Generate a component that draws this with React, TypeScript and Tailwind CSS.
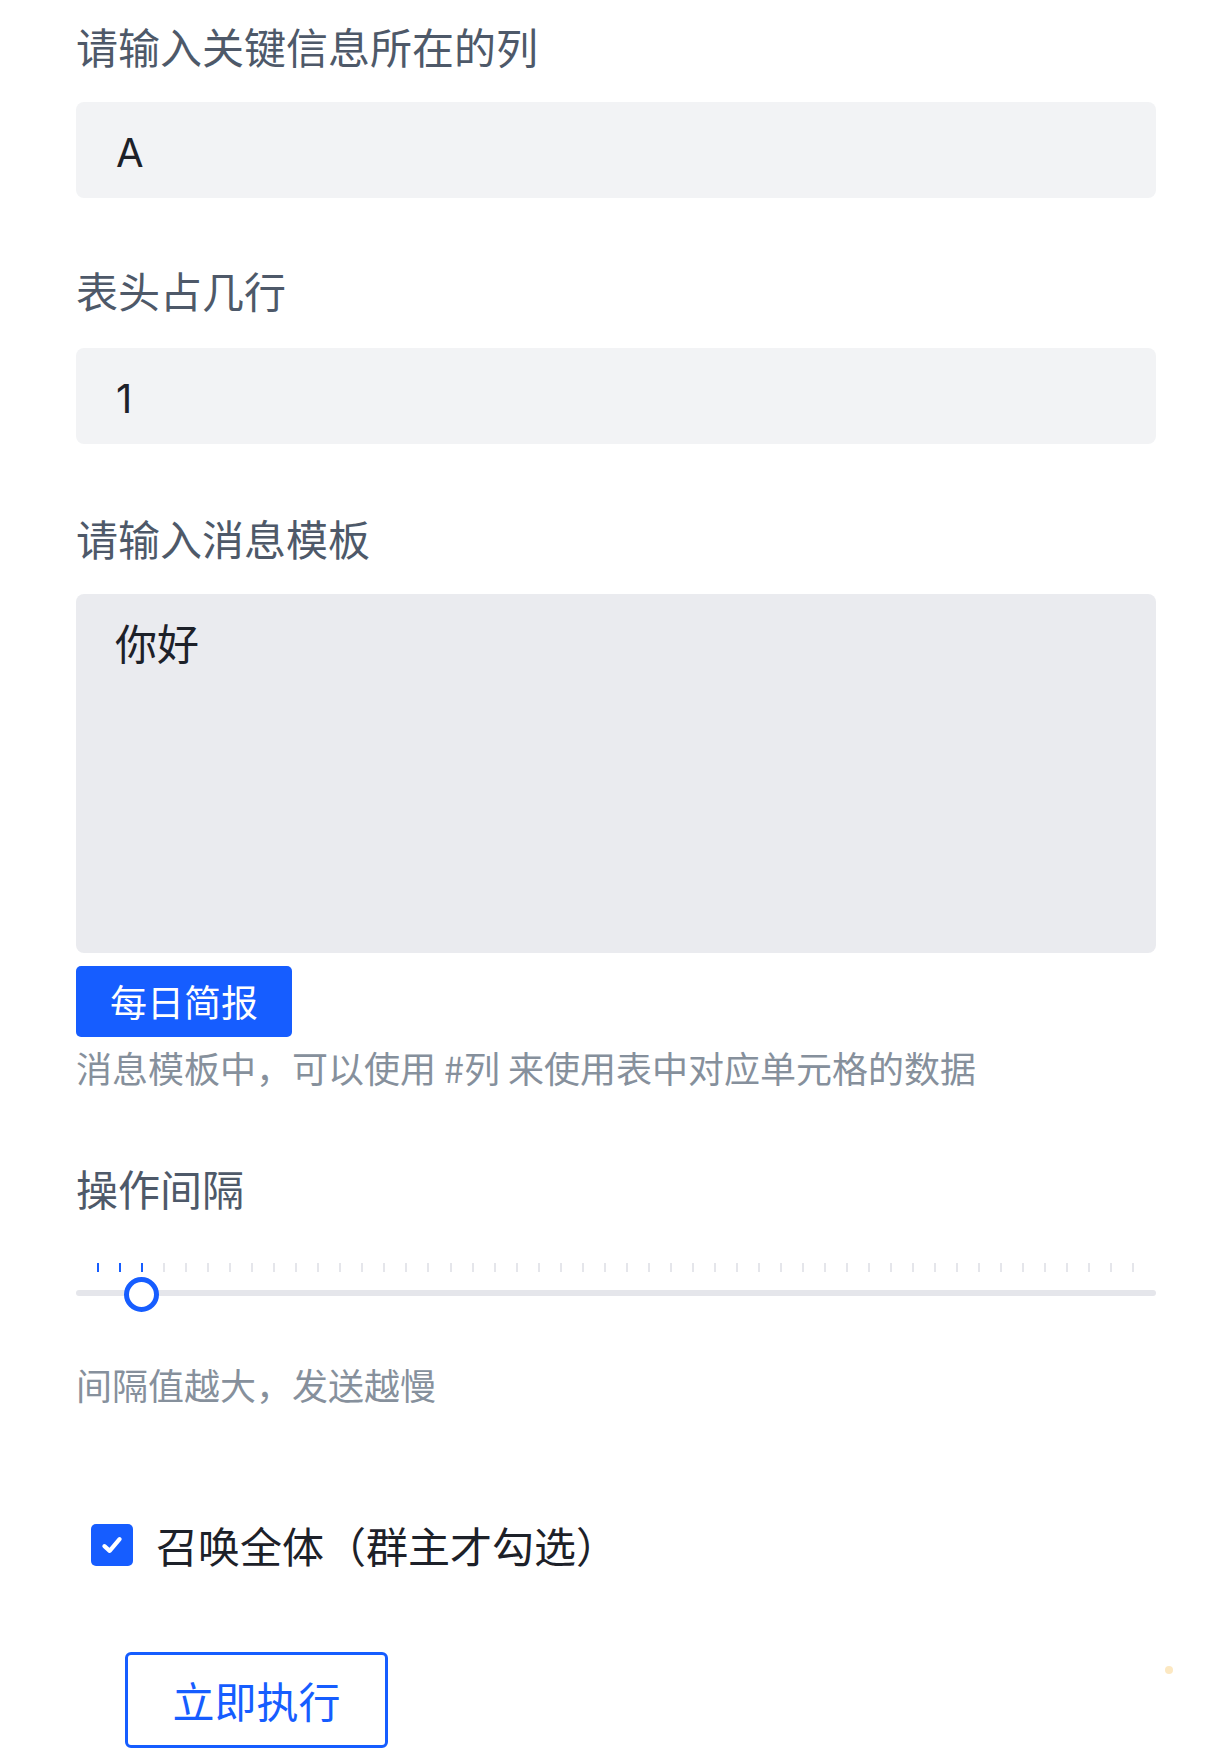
import React from 'react';

const TICKS = Array.from({ length: 48 }, (_, i) => i);
const ACTIVE_TICKS = 3;

export default function App() {
  return (
    <div className="relative min-h-[1756px] bg-white font-['Noto_Sans_CJK_SC',sans-serif]">
      <div className="ml-[76px] w-[1080px] pt-[25px] flex flex-col">
        {/* 关键信息列 */}
        <label className="text-[42px] leading-[42px] text-[#4e5969]">请输入关键信息所在的列</label>
        <input
          readOnly
          value="A"
          className="mt-[35px] h-[96px] w-full rounded-[8px] bg-[#f2f3f5] pl-[40px] pt-[4px] font-['Inter',sans-serif] text-[40px] leading-[42px] text-[#1d2129] outline-none"
        />

        {/* 表头 */}
        <label className="mt-[71px] text-[42px] leading-[42px] text-[#4e5969]">表头占几行</label>
        <input
          readOnly
          value="1"
          className="mt-[37px] h-[96px] w-full rounded-[8px] bg-[#f2f3f5] pl-[40px] pt-[4px] font-['Inter',sans-serif] text-[40px] leading-[42px] text-[#1d2129] outline-none"
        />

        {/* 消息模板 */}
        <label className="mt-[73px] text-[42px] leading-[42px] text-[#4e5969]">请输入消息模板</label>
        <textarea
          readOnly
          value="你好"
          className="mt-[35px] h-[359px] w-full resize-none rounded-[8px] bg-[#eaebef] pl-[39px] pt-[27px] text-[42px] leading-[42px] text-[#1d2129] outline-none"
        />
        <button className="mt-[13px] flex h-[71px] w-[216px] items-center justify-center rounded-[5px] bg-[#165dff] text-[37px] leading-none text-white">
          每日简报
        </button>
        <p className="mt-[12px] text-[36px] leading-[36px] text-[#86909c]">
          消息模板中，可以使用 #列 来使用表中对应单元格的数据
        </p>

        {/* 操作间隔 */}
        <label className="mt-[82px] text-[42px] leading-[42px] text-[#4e5969]">操作间隔</label>
        <div className="mt-[54px] w-full">
          <div className="flex h-[9px] justify-between px-[21px]">
            {TICKS.map((i) => (
              <span
                key={i}
                className={i < ACTIVE_TICKS ? 'h-full w-[2px] bg-[#165dff]' : 'h-full w-[2px] bg-[#e5e6eb]'}
              />
            ))}
          </div>
          <div className="relative mt-[18px] h-[6px] rounded-full bg-[#e5e6eb]">
            <div className="absolute left-[48px] top-[-13px] h-[35px] w-[35px] rounded-full border-[5px] border-[#165dff] bg-white" />
          </div>
        </div>
        <p className="mt-[70px] text-[36px] leading-[36px] text-[#86909c]">间隔值越大，发送越慢</p>

        {/* 召唤全体 */}
        <div className="mt-[122px] ml-[15px] flex h-[42px] items-center gap-[23px]">
          <span className="flex h-[42px] w-[42px] items-center justify-center rounded-[5px] bg-[#165dff]">
            <svg viewBox="0 0 24 24" className="h-[28px] w-[28px]" fill="none" stroke="white" strokeWidth="3.6" strokeLinecap="round" strokeLinejoin="round">
              <path d="M5.5 13l4.5 4L18.5 7" />
            </svg>
          </span>
          <span className="text-[42px] leading-[42px] text-[#1d2129]">召唤全体（群主才勾选）</span>
        </div>

        <button className="mt-[86px] ml-[49px] flex h-[96px] w-[263px] items-center justify-center rounded-[6px] border-[3px] border-[#165dff] bg-white text-[42px] leading-none text-[#165dff]">
          立即执行
        </button>
      </div>

      {/* 悬浮小圆点 */}
      <div className="absolute left-[1165px] top-[1666px] h-[8px] w-[8px] rounded-full bg-[#fce8c2]" />
    </div>
  );
}
